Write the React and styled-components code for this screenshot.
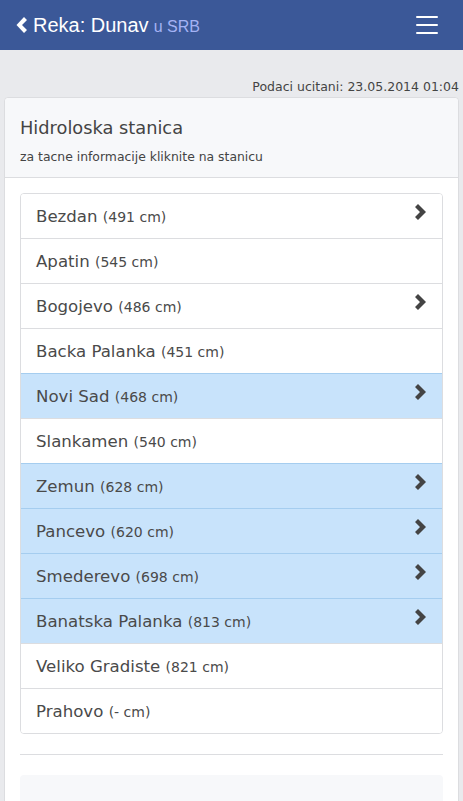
import styled, { createGlobalStyle } from "styled-components";

const GlobalStyle = createGlobalStyle`
  html, body {
    margin: 0;
    padding: 0;
    background: #e9eaed;
  }
  body {
    font-family: "DejaVu Sans", Verdana, sans-serif;
    color: #444;
  }
`;

const Page = styled.div`
  width: 463px;
  height: 801px;
  overflow: hidden;
  background: #e9eaed;
`;

const NavBar = styled.header`
  height: 50px;
  background: #3b5898;
  display: flex;
  align-items: center;
  justify-content: space-between;
  padding: 0 25px 0 16px;
  box-sizing: border-box;
`;

const Title = styled.div`
  display: flex;
  align-items: baseline;
  gap: 5px;
  font-family: "Liberation Sans", Arial, sans-serif;
  color: #fff;
  font-size: 20px;
`;

const Sub = styled.span`
  font-size: 16px;
  color: #a4b2f4;
`;

const Burger = styled.div`
  display: flex;
  flex-direction: column;
  gap: 6px;
  width: 22px;

  span {
    height: 2px;
    background: #fff;
    border-radius: 1px;
  }
`;

const Loaded = styled.div`
  text-align: right;
  font-size: 12.5px;
  padding: 29px 4px 0 0;
  line-height: 16px;
  color: #444;
`;

const Panel = styled.section`
  margin: 2px 4px 0 4px;
  background: #fff;
  border: 1px solid #dcdde0;
  border-radius: 4px;
`;

const PanelHead = styled.div`
  background: #f7f8fa;
  border-bottom: 1px solid #dcdde0;
  border-radius: 4px 4px 0 0;
  padding: 19px 15px 11px 15px;
  height: 49px;

  h3 {
    margin: 0;
    font-weight: normal;
    font-size: 17.8px;
    line-height: 22px;
  }

  p {
    margin: 10px 0 0;
    font-size: 12.4px;
    line-height: 16px;
  }
`;

const PanelBody = styled.div`
  padding: 15px 15px 0 15px;
`;

const List = styled.ul`
  list-style: none;
  margin: 0;
  padding: 0;
  border: 1px solid #dcdde0;
  border-radius: 4px;
  overflow: hidden;
`;

const Item = styled.li`
  height: 44px;
  display: flex;
  align-items: center;
  justify-content: space-between;
  padding: 1px 15px 0 15px;
  box-sizing: border-box;
  background: ${({ $active }) => ($active ? "#c8e3fb" : "#fff")};
  border-top: 1px solid ${({ $active }) => ($active ? "#a5cdef" : "#dcdde0")};
  font-size: 16.6px;
  color: #4a4a4a;

  &:first-child {
    border-top: none;
    height: 44px;
  }

  &:not(:first-child) {
    height: 45px;
  }

  small {
    font-size: 14px;
  }
`;

const Chevron = styled.svg`
  width: 13px;
  height: 16px;
  margin-top: -10px;
  flex-shrink: 0;
`;

const Rule = styled.hr`
  border: none;
  border-top: 1px solid #dcdde0;
  margin: 20px 0 20px;
`;

const Info = styled.div`
  background: #f7f8fa;
  border-radius: 4px;
  height: 60px;
  font-size: 14px;
  padding: 27px 15px;
`;

const stations = [
  { name: "Bezdan", level: "491", link: true },
  { name: "Apatin", level: "545" },
  { name: "Bogojevo", level: "486", link: true },
  { name: "Backa Palanka", level: "451" },
  { name: "Novi Sad", level: "468", link: true, active: true },
  { name: "Slankamen", level: "540" },
  { name: "Zemun", level: "628", link: true, active: true },
  { name: "Pancevo", level: "620", link: true, active: true },
  { name: "Smederevo", level: "698", link: true, active: true },
  { name: "Banatska Palanka", level: "813", link: true, active: true },
  { name: "Veliko Gradiste", level: "821" },
  { name: "Prahovo", level: "-" },
];

function ChevronRight() {
  return (
    <Chevron viewBox="0 0 13 16">
      <polygon points="1,3 4,0 12,8 4,16 1,13 6,8" fill="#444" />
    </Chevron>
  );
}

export default function App() {
  return (
    <Page>
      <GlobalStyle />
      <NavBar>
        <Title>
          <svg width="12" height="16" viewBox="0 0 12 16" style={{ alignSelf: "center" }}>
            <polygon points="11,3 8,0 0.5,8 8,16 11,13 6,8" fill="#fff" />
          </svg>
          <span>Reka: Dunav</span>
          <Sub>u SRB</Sub>
        </Title>
        <Burger>
          <span />
          <span />
          <span />
        </Burger>
      </NavBar>
      <Loaded>Podaci ucitani: 23.05.2014 01:04</Loaded>
      <Panel>
        <PanelHead>
          <h3>Hidroloska stanica</h3>
          <p>za tacne informacije kliknite na stanicu</p>
        </PanelHead>
        <PanelBody>
          <List>
            {stations.map((s) => (
              <Item key={s.name} $active={s.active}>
                <span>
                  {s.name} <small>({s.level} cm)</small>
                </span>
                {s.link && <ChevronRight />}
              </Item>
            ))}
          </List>
          <Rule />
          <Info>Trenutno stanje vodostaja na stanicama</Info>
        </PanelBody>
      </Panel>
    </Page>
  );
}
